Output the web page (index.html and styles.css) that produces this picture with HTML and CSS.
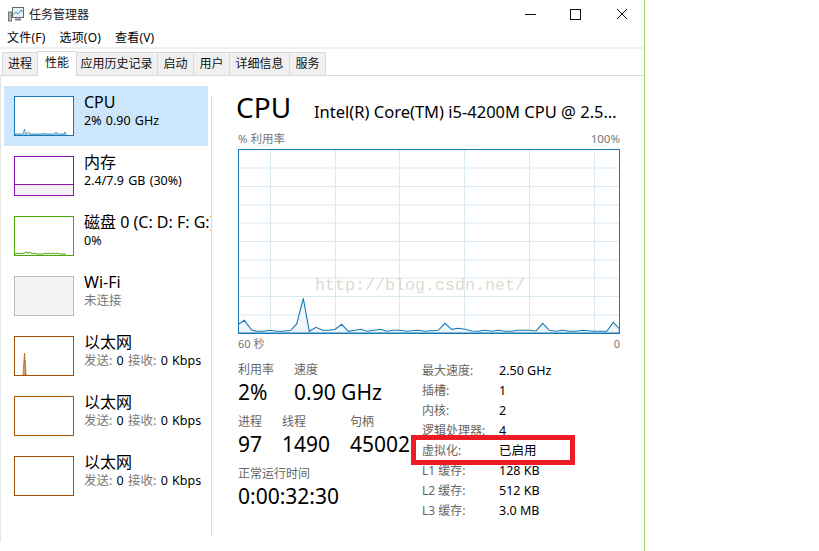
FILE: index.html
```html
<!DOCTYPE html>
<html lang="zh">
<head>
<meta charset="utf-8">
<title>任务管理器</title>
<link rel="stylesheet" href="styles.css">
</head>
<body>
<div class="window">
  <header class="titlebar">
    <svg class="app-icon" width="16" height="16" viewBox="0 0 16 16"><rect x="0.5" y="6" width="3" height="9" fill="#b9b9b9" stroke="#777"/><rect x="4.5" y="1.5" width="11" height="10" fill="#e6f1f6" stroke="#666"/><path d="M5.5 8.5 8 6l2 2 3-4 1.500 2" fill="none" stroke="#3d8fb5"/><path d="M7 13.500h6" stroke="#777" stroke-width="2"/></svg>
    <span class="title">任务管理器</span>
    <div class="controls">
      <svg class="ctl-min" width="11" height="11" viewBox="0 0 11 11"><path d="M0 5.500h11" stroke="#111"/></svg>
      <svg class="ctl-max" width="11" height="11" viewBox="0 0 11 11"><rect x="0.5" y="0.5" width="10" height="10" fill="none" stroke="#111"/></svg>
      <svg class="ctl-close" width="12" height="12" viewBox="0 0 12 12"><path d="M1 1l10 10M11 1L1 11" stroke="#111"/></svg>
    </div>
  </header>
  <nav class="menu"><span>文件(F)</span><span>选项(O)</span><span>查看(V)</span></nav>
  <div class="tabs">
    <span class="tab first">进程</span><span class="tab active">性能</span><span class="tab wide">应用历史记录</span><span class="tab">启动</span><span class="tab">用户</span><span class="tab">详细信息</span><span class="tab">服务</span>
  </div>
  <div class="perf">
    <aside class="side">
      <div class="item selected">
        <svg class="thumb" width="60" height="40" viewBox="0 0 60 40"><rect x=".5" y=".5" width="59" height="39" fill="#fff"/><path d="M1 38h8l1.500-5 1 5 3-2 1.500 2h12l1-1 2 1h10l1-2 1 2h7l1-2 1 2v1H1z" fill="#e8f3fa" stroke="#1979b5" stroke-width=".7"/><rect x=".5" y=".5" width="59" height="39" fill="none" stroke="#1979b5"/></svg>
        <div class="info"><div class="name">CPU</div><div class="sub">2% 0.90 GHz</div></div>
      </div>
      <div class="item">
        <svg class="thumb" width="60" height="40" viewBox="0 0 60 40"><rect x="1" y="28" width="58" height="11" fill="#f3eff5"/><path d="M1 28.500h58" stroke="#8b12ae"/><rect x=".5" y=".5" width="59" height="39" fill="none" stroke="#8b12ae"/></svg>
        <div class="info"><div class="name">内存</div><div class="sub">2.4/7.9 GB (30%)</div></div>
      </div>
      <div class="item">
        <svg class="thumb" width="60" height="40" viewBox="0 0 60 40"><path d="M1 38l2-1 1 1 2-1 1 1 3-1 2-1 2 1 2-1 2 2 3-1 1 1h8l1-1 2 1 2-1 2 1 2-1 2 1 2-1 2 1h7" fill="#eef6e8" stroke="#4da60c"/><rect x=".5" y=".5" width="59" height="39" fill="none" stroke="#4da60c"/></svg>
        <div class="info"><div class="name">磁盘 0 (C: D: F: G:)</div><div class="sub">0%</div></div>
      </div>
      <div class="item">
        <svg class="thumb" width="60" height="40" viewBox="0 0 60 40"><rect x=".5" y=".5" width="59" height="39" fill="#f4f4f4" stroke="#bbb"/></svg>
        <div class="info"><div class="name">Wi-Fi</div><div class="sub muted">未连接</div></div>
      </div>
      <div class="item">
        <svg class="thumb" width="60" height="40" viewBox="0 0 60 40"><path d="M9 39l1.500-22 1.500 22z" fill="#edc9a8" stroke="#a74f01" stroke-width=".7"/><path d="M11 39V24" stroke="#a74f01" stroke-width=".7"/><rect x=".5" y=".5" width="59" height="39" fill="none" stroke="#a74f01"/></svg>
        <div class="info"><div class="name">以太网</div><div class="sub"><span class="muted">发送:</span> 0 <span class="muted">接收:</span> 0 Kbps</div></div>
      </div>
      <div class="item">
        <svg class="thumb" width="60" height="40" viewBox="0 0 60 40"><rect x=".5" y=".5" width="59" height="39" fill="none" stroke="#a74f01"/></svg>
        <div class="info"><div class="name">以太网</div><div class="sub"><span class="muted">发送:</span> 0 <span class="muted">接收:</span> 0 Kbps</div></div>
      </div>
      <div class="item">
        <svg class="thumb" width="60" height="40" viewBox="0 0 60 40"><rect x=".5" y=".5" width="59" height="39" fill="none" stroke="#a74f01"/></svg>
        <div class="info"><div class="name">以太网</div><div class="sub"><span class="muted">发送:</span> 0 <span class="muted">接收:</span> 0 Kbps</div></div>
      </div>
    </aside>
    <div class="sep"></div>
    <main class="main">
      <div class="head"><h1>CPU</h1><div class="model">Intel(R) Core(TM) i5-4200M CPU @ 2.50GHz</div></div>
      <div class="axis top"><span>% 利用率</span><span>100%</span></div>
      <div class="chart">
        <svg width="382" height="185" viewBox="238 149 382 185">
          <path d="M238 168h382M238 186.500h382M238 205h382M238 223h382M238 241.500h382M238 260h382M238 278h382M238 296.500h382M238 315h382M270.500 149v185M335.500 149v185M399.500 149v185M464.500 149v185M529.500 149v185M594.500 149v185" fill="none" stroke="#d9e9f3"/>
          <path d="M238.300 324.300L244.300 320.300 251.700 330 256.700 331.300 263.300 331.300 270 330.300 276.700 331.300 283.300 331.300 290.700 330.300 296.700 324 303.300 298.300 309.300 331.300 316 327.300 322.700 330.300 329.300 330.300 335.300 329.300 341.700 324.300 348.300 331.300 355 330.300 360.700 329.300 367.300 331.300 374 330.300 380.700 329.300 386.700 331.300 393.300 330.300 400 330.300 406.700 331.300 418.300 330.300 425 331.300 438.300 330.300 445 323.300 451.700 329.300 458.300 328.300 465 329.300 471.700 331 478.300 331.300 485 330.300 491.700 331.300 498.300 330.300 505 331.300 511.700 331.300 518.300 330.300 530 330.300 536 331 542.700 323.300 549.300 330.300 556 331.300 562.700 330.300 569.300 331.300 576 331.300 582.700 330.300 593.300 331.300 606.700 331.300 613.300 322.300 619.300 328.700V333H238Z" fill="#f1f6fa" stroke="#1979b5" stroke-width="1.100"/>
          <rect x="238.500" y="149.500" width="381" height="184" fill="none" stroke="#1979b5"/>
        </svg>
        <span class="watermark">http://blog.csdn.net/</span>
      </div>
      <div class="axis bottom"><span>60 秒</span><span>0</span></div>
      <div class="stats">
        <div class="dyn">
          <div class="dyn-row">
            <div class="stat w56"><div class="label">利用率</div><div class="value">2%</div></div>
            <div class="stat"><div class="label">速度</div><div class="value">0.90 GHz</div></div>
          </div>
          <div class="dyn-row">
            <div class="stat w44"><div class="label">进程</div><div class="value">97</div></div>
            <div class="stat w68"><div class="label">线程</div><div class="value">1490</div></div>
            <div class="stat"><div class="label">句柄</div><div class="value">45002</div></div>
          </div>
          <div class="dyn-row">
            <div class="stat"><div class="label">正常运行时间</div><div class="value">0:00:32:30</div></div>
          </div>
        </div>
        <dl class="specs">
          <dt>最大速度:</dt><dd>2.50 GHz</dd>
          <dt>插槽:</dt><dd>1</dd>
          <dt>内核:</dt><dd>2</dd>
          <dt>逻辑处理器:</dt><dd>4</dd>
          <dt>虚拟化:</dt><dd>已启用</dd>
          <dt>L1 缓存:</dt><dd>128 KB</dd>
          <dt>L2 缓存:</dt><dd>512 KB</dd>
          <dt>L3 缓存:</dt><dd>3.0 MB</dd>
          <div class="redbox"></div>
        </dl>
      </div>
    </main>
  </div>
</div>
</body>
</html>
```
FILE: styles.css
```css
* { box-sizing: border-box; }
html, body { margin: 0; height: 100%; background: #fff; overflow: hidden; }
body { font-family: "Noto Sans", "Noto Sans CJK SC", sans-serif; font-size: 12px; color: #000; }
.window { width: 645px; height: 551px; border-right: 1px solid #a0d468; }

.titlebar { height: 28px; display: flex; align-items: center; padding-left: 8px; position: relative; }
.app-icon { margin-right: 5px; }
.title { color: #222; }
.controls { margin-left: auto; display: flex; align-items: center; padding-right: 16px; }
.ctl-min { margin-right: 34px; }
.ctl-max { margin-right: 35px; }

.menu { height: 19px; display: flex; align-items: center; gap: 14px; padding-left: 7px; line-height: 19px; letter-spacing: .2px; }
.tabs { height: 29px; border-top: 2px solid #f0f0f0; border-bottom: 1px solid #d9d9d9; display: flex; align-items: flex-end; padding-left: 2px; }
.tab { height: 23px; line-height: 21px; padding: 0 5.5px; background: #f0f0f0; border: 1px solid #d9d9d9; border-bottom: 0; margin-right: -1px; color: #111; }
.tab.first { padding: 0 5px; }
.tab.wide { padding: 0 4.5px 0 3.5px; }
.tab.active { height: 25px; margin-bottom: -1px; line-height: 21px; padding: 0 7px; background: #fff; position: relative; z-index: 1; }

.perf { display: flex; height: 466px; }
.side { width: 211px; padding: 10px 0 0 3px; border-left: 1px solid #e6e6e6; overflow: hidden; }
.item { width: 204px; height: 60px; padding: 10px 0 0 10px; display: flex; }
.item.selected { background: #cce6fb; }
.thumb { flex: none; display: block; }
.info { margin-left: 10px; margin-top: -4px; white-space: nowrap; }
.name { font-size: 16px; line-height: 20px; }
.sub { font-size: 12.5px; line-height: 16px; margin-top: 1px; word-spacing: 1px; }
.muted { color: #777; }
.sep { width: 1px; margin: 20px 0 5px; background: #d9d9d9; }

.main { flex: 1; padding: 0 24px 0 26px; min-width: 0; }
.head { display: flex; align-items: baseline; height: 55px; padding-top: 12px; margin-left: -2px; }
h1 { margin: 0; font-size: 28px; line-height: 38px; font-weight: 400; width: 78px; }
.model { font-size: 16.5px; flex: 1; min-width: 0; white-space: nowrap; overflow: hidden; text-overflow: ellipsis; }
.axis { display: flex; justify-content: space-between; font-size: 11.5px; color: #777; line-height: 16px; }
.axis.top { height: 18px; }
.chart { position: relative; width: 382px; height: 185px; }
.chart svg { display: block; }
.watermark { position: absolute; left: 77px; top: 127px; font-family: "Liberation Mono", monospace; font-size: 16.67px; color: rgba(150,150,130,.36); white-space: nowrap; }
.axis.bottom { margin-top: 2px; height: 26px; font-size: 11px; }

.stats { display: flex; }
.dyn { width: 184px; flex: none; }
.dyn-row { display: flex; margin-bottom: 8px; }
.stat { flex: none; }
.w56 { width: 56px; }
.w44 { width: 44px; }
.w68 { width: 68px; }
.label { color: #666; font-size: 12px; line-height: 16px; white-space: nowrap; }
.value { font-size: 21px; line-height: 28px; white-space: nowrap; }

.specs { position: relative; margin: -1px 0 0; display: grid; grid-template-columns: 77px auto; grid-auto-rows: 20px; line-height: 20px; align-content: start; flex: 1; }
dt { color: #666; }
dd { margin: 0; font-size: 12.5px; }
.redbox { position: absolute; left: -11px; top: 74px; width: 164px; height: 30px; border: 5px solid #ed1c24; }
```
